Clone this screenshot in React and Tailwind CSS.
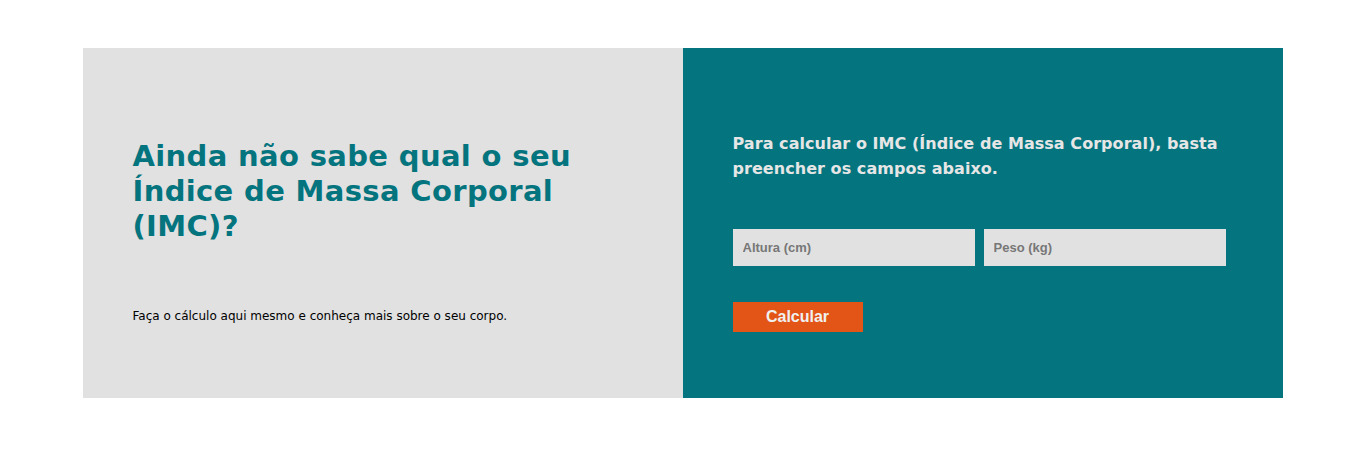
import React from 'react';

export default function App() {
  return (
    <div className="min-h-[454px] bg-white pt-[48px]">
      <div className="mx-auto flex w-[1200px] h-[350px]">
        {/* Left */}
        <div className="w-[600px] bg-[#e1e1e1] px-[50px] pt-[91px]" style={{ fontFamily: '"DejaVu Sans", Verdana, sans-serif' }}>
          <h2 className="text-[29px] leading-[35px] font-bold text-[#04747e] tracking-[0.35px]">
            Ainda não sabe qual o seu Índice de Massa Corporal (IMC)?
          </h2>
          <p className="mt-[63px] text-[12px] leading-[18px] text-black">
            Faça o cálculo aqui mesmo e conheça mais sobre o seu corpo.
          </p>
        </div>

        {/* Right */}
        <div className="w-[600px] bg-[#04747e] px-[50px] pt-[83px]">
          <p className="text-[16px] leading-[25px] font-bold text-[#e6e6e6] tracking-[0.05px]" style={{ fontFamily: '"DejaVu Sans", Verdana, sans-serif' }}>
            Para calcular o IMC (Índice de Massa Corporal), basta preencher os campos abaixo.
          </p>
          <div className="mt-[48px] flex gap-[9px]" style={{ fontFamily: '"Liberation Sans", Arial, sans-serif' }}>
            <input
              placeholder="Altura (cm)"
              className="w-[242px] h-[37px] bg-[#e1e1e1] px-[10px] text-[13px] font-bold text-[#777] placeholder:text-[#777] outline-none"
            />
            <input
              placeholder="Peso (kg)"
              className="w-[242px] h-[37px] bg-[#e1e1e1] px-[10px] text-[13px] font-bold text-[#777] placeholder:text-[#777] outline-none"
            />
          </div>
          <button
            className="mt-[36px] w-[130px] h-[30px] bg-[#e35517] text-[#f0f0f0] text-[16px] font-bold"
            style={{ fontFamily: '"Liberation Sans", Arial, sans-serif' }}
          >
            Calcular
          </button>
        </div>
      </div>
    </div>
  );
}
